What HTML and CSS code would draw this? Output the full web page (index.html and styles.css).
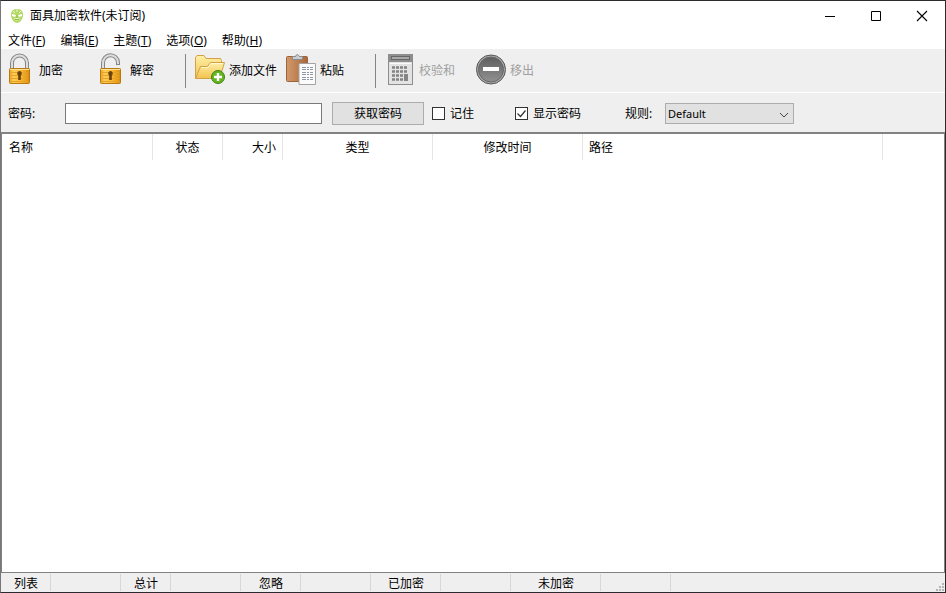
FILE: index.html
```html
<!DOCTYPE html>
<html lang="zh-CN">
<head>
<meta charset="utf-8">
<title>面具加密软件(未订阅)</title>
<link rel="stylesheet" href="styles.css">
</head>
<body>
<div class="window">
  <header class="titlebar">
    <svg class="app-icon" width="14" height="16" viewBox="0 0 14 16">
      <path d="M7 1C11 1 13 3 13 7c0 4-3 8-6 8S1 11 1 7c0-4 2-6 6-6z" fill="#b4d968"/>
      <path d="M7 1v3M3 3l2 2M11 3L9 5" stroke="#e8f6c8"/>
      <path d="M2 6l4 1-1 2-3-1zM12 6L8 7l1 2 3-1z" fill="#fff"/>
      <path d="M4 11q3-2 6 0-3 3-6 0z" fill="#f4fbe4"/>
      <path d="M5 11.500h4M7 7v3" stroke="#8fbd3f"/>
    </svg>
    <h1 class="title">面具加密软件(未订阅)</h1>
    <div class="controls">
      <button class="control" type="button" aria-label="最小化"><svg width="12" height="12"><path d="M1 6.500h10" stroke="#000"/></svg></button>
      <button class="control" type="button" aria-label="最大化"><svg width="12" height="12"><path d="M1.500 1.500h9v9h-9z" fill="none" stroke="#000"/></svg></button>
      <button class="control" type="button" aria-label="关闭"><svg width="12" height="12"><path d="M1 1l10 10M11 1L1 11" stroke="#000" stroke-width="1.100"/></svg></button>
    </div>
  </header>

  <nav class="menubar">
    <button class="menu" type="button">文件(<u>F</u>)</button>
    <button class="menu" type="button">编辑(<u>E</u>)</button>
    <button class="menu" type="button">主题(<u>T</u>)</button>
    <button class="menu" type="button">选项(<u>O</u>)</button>
    <button class="menu" type="button">帮助(<u>H</u>)</button>
  </nav>

  <svg class="defs" width="0" height="0">
    <defs>
      <linearGradient id="gold" x2="1"><stop offset="0" stop-color="#e8a01c"/><stop offset=".2" stop-color="#ffce58"/><stop offset=".6" stop-color="#fbb52c"/><stop offset="1" stop-color="#d98c10"/></linearGradient>
      <linearGradient id="folder" y2="1" x2="0"><stop offset="0" stop-color="#fff0a8"/><stop offset="1" stop-color="#f2c24c"/></linearGradient>
      <linearGradient id="board" x2="1"><stop offset="0" stop-color="#d3996a"/><stop offset="1" stop-color="#a9683a"/></linearGradient>
      <linearGradient id="dark" y2="1" x2="0"><stop offset="0" stop-color="#5e5e5e"/><stop offset="1" stop-color="#929292"/></linearGradient>
      <g id="lock-body">
        <rect x="5.500" y="13.500" width="20" height="15" rx="1" fill="url(#gold)" stroke="#b87812"/>
        <path d="M7 17.500h17M7 20.500h17M7 23.500h17M7 26.500h17" stroke="#e8a32a"/>
        <path d="M6 14.500h19" stroke="#ffe293"/>
        <path d="M15.500 16a2.500 2.500 0 0 0-1.300 4.500V25h2.600v-4.500A2.500 2.500 0 0 0 15.500 16z" fill="#684312"/>
      </g>
    </defs>
  </svg>

  <div class="toolbar">
    <button class="tool" type="button">
      <svg width="32" height="32" viewBox="0 0 32 32">
        <path d="M8 14V8a7.500 7.500 0 0 1 15 0v6" fill="none" stroke="#858585" stroke-width="4"/>
        <path d="M8 14V8a7.500 7.500 0 0 1 15 0v6" fill="none" stroke="#dedede" stroke-width="2"/>
        <use href="#lock-body"/>
      </svg>加密</button>
    <button class="tool" type="button">
      <svg width="32" height="32" viewBox="0 0 32 32">
        <path d="M8 14V8a7.500 7.500 0 0 1 15-.500V10" fill="none" stroke="#858585" stroke-width="4"/>
        <path d="M8 14V8a7.500 7.500 0 0 1 15-.500V9" fill="none" stroke="#dedede" stroke-width="2"/>
        <use href="#lock-body"/>
      </svg>解密</button>
    <span class="divider"></span>
    <button class="tool" type="button">
      <svg width="32" height="32" viewBox="0 0 32 32">
        <path d="M1.500 23.500V2.500L3 .500h7l2 3h14.500l1 2v18z" fill="url(#folder)" stroke="#d2a046"/>
        <path d="M1.500 23.500l5-12h7l3-4h14l-5 16z" fill="url(#folder)" stroke="#d2a046"/>
        <path d="M7.500 12.500h6.500l3-4h12" fill="none" stroke="#fff8cf"/>
        <circle cx="24" cy="22" r="6.500" fill="#66b522" stroke="#3d850e"/>
        <path d="M24 18v8M20 22h8" stroke="#fff" stroke-width="2.400"/>
      </svg>添加文件</button>
    <button class="tool" type="button">
      <svg width="32" height="32" viewBox="0 0 32 32">
        <rect x="1.500" y="1.500" width="21" height="25" rx="1" fill="url(#board)" stroke="#9c6538"/>
        <path d="M7.500 4.500v-3h3q1.500-4 4 0h3v3z" fill="#ccc" stroke="#858c94"/>
        <path d="M14 8.500h16.500v21H14z" fill="#fbfbfb" stroke="#a3a3a3"/>
        <path d="M17 12.500h11M17 14.500h11M17 17.500h11M17 19.500h11M17 22.500h11M17 24.500h11" stroke="#8e98a3" stroke-dasharray="4 1 2 1"/>
      </svg>粘贴</button>
    <span class="divider"></span>
    <button class="tool" type="button" disabled>
      <svg width="32" height="32" viewBox="0 0 32 32">
        <rect x="4.500" y="-.500" width="24" height="30" fill="#e3e3e3" stroke="#8d8d8d"/>
        <rect x="5" y="0" width="23" height="7" fill="#8d8d8d"/>
        <rect x="7.500" y="1.500" width="18" height="3" fill="#a8a8a8" stroke="#666"/>
        <path d="M8 12.500h16M8 16.500h16M8 20.500h12M8 24.500h12" stroke="#838383" stroke-width="2.600" stroke-dasharray="3 1"/>
        <path d="M20 19h4v7h-4z" fill="#858585"/>
        <path d="M6 8.500h21" stroke="#fafafa"/>
      </svg>校验和</button>
    <button class="tool" type="button" disabled>
      <svg width="32" height="32" viewBox="0 0 32 32">
        <circle cx="16" cy="14.500" r="14.500" fill="#aaa" stroke="#555"/>
        <circle cx="16" cy="14.500" r="12.500" fill="url(#dark)" stroke="#666"/>
        <rect x="8" y="12" width="16" height="4" fill="#fff"/>
      </svg>移出</button>
  </div>

  <form class="options">
    <label class="field-label" for="password">密码:</label>
    <input class="password" id="password" type="text">
    <button class="get" type="button">获取密码</button>
    <label class="check remember"><input type="checkbox">记住</label>
    <label class="check show"><input type="checkbox" checked>显示密码</label>
    <label class="rule-label" for="rule">规则:</label>
    <span class="select-box">
      <select class="rule" id="rule"><option>Default</option></select>
      <svg class="chevron" width="10" height="6"><path d="M1 1l4 4 4-4" fill="none" stroke="#444"/></svg>
    </span>
  </form>

  <main class="list">
    <table class="files">
      <colgroup><col class="w150"><col class="w70"><col class="w60"><col class="w150"><col class="w150"><col class="w300"></colgroup>
      <thead>
        <tr><th>名称</th><th class="center">状态</th><th class="right">大小</th><th class="center">类型</th><th class="center">修改时间</th><th>路径</th></tr>
      </thead>
    </table>
  </main>

  <footer class="status">
    <span class="cell w50">列表</span><span class="cell w70"></span>
    <span class="cell w50">总计</span><span class="cell w70"></span>
    <span class="cell w60">忽略</span><span class="cell w70"></span>
    <span class="cell w70">已加密</span><span class="cell w70"></span>
    <span class="cell w90">未加密</span><span class="cell w70"></span>
    <svg class="grip" width="9" height="9"><path d="M6 0h2v2H6zM3 3h2v2H3zM6 3h2v2H6zM0 6h2v2H0zM3 6h2v2H3zM6 6h2v2H6z" fill="#b4b4b4"/></svg>
  </footer>
</div>
</body>
</html>
```
FILE: styles.css
```css
* { box-sizing: border-box; }

body {
  margin: 0;
  font: 12px/16px "Noto Sans", "Noto Sans CJK SC", sans-serif;
  color: #000;
}

button, input, select { font: inherit; color: inherit; }
button { border: 0; padding: 0; background: none; }

.window {
  display: flex;
  flex-direction: column;
  min-height: 100vh;
  border: 1px solid #2b2a2e;
  border-left-color: #77767c;
  background: #efefef;
}

.titlebar {
  display: flex;
  align-items: center;
  height: 30px;
  padding-left: 9px;
  background: #fff;
}
.title { margin: 0 auto 0 6px; font-size: 12px; font-weight: 400; }
.controls { display: flex; }
.control {
  display: flex;
  align-items: center;
  justify-content: center;
  width: 46px;
  height: 28px;
}

.menubar {
  display: flex;
  gap: 15px;
  height: 18px;
  padding: 2px 0 0 7px;
  background: #fff;
}
.menu { height: 16px; }
.menu u { text-underline-offset: 1px; }

.defs { position: absolute; }

.toolbar {
  display: flex;
  align-items: center;
  height: 44px;
  padding-left: 3px;
  border-bottom: 1px solid #fff;
}
.tool {
  display: flex;
  align-items: center;
  gap: 3px;
  width: 91px;
  white-space: nowrap;
}
.tool svg { overflow: visible; }
.tool:disabled { color: #a0a0a0; }
.divider {
  width: 1px;
  height: 34px;
  margin: 0 8px 0 -1px;
  background: #858585;
}

.options {
  display: flex;
  align-items: center;
  height: 39px;
  padding: 2px 0 0 7px;
}
.field-label { width: 57px; }
.password {
  width: 257px;
  height: 21px;
  border: 1px solid #7a7a7a;
  background: #fff;
}
.get {
  width: 92px;
  height: 23px;
  margin-left: 10px;
  border: 1px solid #adadad;
  background: #e1e1e1;
}
.check { display: flex; align-items: center; gap: 5px; }
.check input {
  appearance: none;
  width: 13px;
  height: 13px;
  margin: 0;
  border: 1px solid #333;
  background: #fff;
}
.check input:checked {
  background: #fff url("data:image/svg+xml,%3Csvg xmlns='http://www.w3.org/2000/svg' width='11' height='11'%3E%3Cpath d='M1.500 5.500l3 3 5-6' fill='none' stroke='%23333' stroke-width='1.200'/%3E%3C/svg%3E");
}
.remember { width: 83px; margin-left: 8px; }
.show { width: 110px; }
.rule-label { width: 40px; }
.select-box { position: relative; display: flex; }
.rule {
  appearance: none;
  width: 129px;
  height: 21px;
  padding: 0 2px;
  border: 1px solid #adadad;
  border-radius: 0;
  background: #e1e1e1;
  font-size: 11px;
}
.chevron { position: absolute; right: 5px; top: 9px; pointer-events: none; }

.list {
  flex: 1;
  padding-left: 1px;
  border: 1px solid #828282;
  border-top-width: 2px;
  background: #fff;
}
.files { table-layout: fixed; width: 880px; border-collapse: separate; border-spacing: 0; }
.files th {
  height: 26px;
  padding: 2px 6px 0;
  border-right: 1px solid #e5e5e5;
  font-weight: 400;
  text-align: left;
}
.files .center { text-align: center; }
.files .right { text-align: right; }

.w50 { width: 50px; }
.w60 { width: 60px; }
.w70 { width: 70px; }
.w90 { width: 90px; }
.w150 { width: 150px; }
.w300 { width: 300px; }

.status { display: flex; align-items: center; height: 19px; }
.cell {
  height: 17px;
  padding: 2px 0 0 1px;
  border-right: 1px solid #d7d7d7;
  text-align: center;
}
.grip { align-self: flex-end; margin-left: auto; }
```
